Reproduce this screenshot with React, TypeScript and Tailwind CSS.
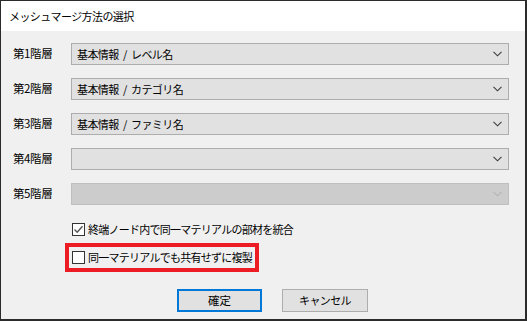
import React from 'react';

const font = { fontFamily: '"Noto Sans CJK JP", "Noto Sans", sans-serif' };

interface Level {
  label: string;
  value: string;
  disabled?: boolean;
}

const levels: Level[] = [
  { label: '第1階層', value: '基本情報 / レベル名' },
  { label: '第2階層', value: '基本情報 / カテゴリ名' },
  { label: '第3階層', value: '基本情報 / ファミリ名' },
  { label: '第4階層', value: '' },
  { label: '第5階層', value: '', disabled: true },
];

const Chevron: React.FC<{ disabled?: boolean }> = ({ disabled }) => (
  <svg width="9" height="6" viewBox="0 0 9 6" className="shrink-0">
    <polyline
      points="0.5,0.8 4.5,4.8 8.5,0.8"
      fill="none"
      stroke={disabled ? '#b4b4b4' : '#3c3c3c'}
      strokeWidth="1.1"
    />
  </svg>
);

const ComboRow: React.FC<{ level: Level }> = ({ level }) => (
  <div className="flex items-center h-[22px]">
    <span className="w-[58px] text-[11.5px] text-black tracking-[-0.4px]">{level.label}</span>
    <div
      className={`flex-1 h-[22px] flex items-center justify-between pl-[5px] pr-[6px] border ${
        level.disabled ? 'bg-[#cccccc] border-[#bfbfbf]' : 'bg-[#e1e1e1] border-[#adadad]'
      }`}
    >
      <span className="text-[11px] text-black tracking-[-0.6px] leading-none [word-spacing:2.5px]">
        {level.value}
      </span>
      <Chevron disabled={level.disabled} />
    </div>
  </div>
);

const Checkbox: React.FC<{ checked?: boolean; label: string }> = ({ checked, label }) => (
  <div className="flex items-center gap-[3px] h-[16px]">
    <div className="w-[13px] h-[13px] border border-[#333333] bg-white flex items-center justify-center">
      {checked && (
        <svg width="11" height="11" viewBox="0 0 11 11">
          <polyline points="1.5,5.5 4.2,8.2 9.5,2.2" fill="none" stroke="#555555" strokeWidth="1.4" />
        </svg>
      )}
    </div>
    <span className="text-[11px] text-black tracking-[-0.75px] leading-none">{label}</span>
  </div>
);

export default function App() {
  return (
    <div
      className="w-[527px] h-[321px] bg-[#2b2b2b] pl-px pt-px pr-[2px] pb-[2px] overflow-hidden"
      style={font}
    >
      <div className="w-full h-full flex flex-col bg-[#f0f0f0]">
        {/* Title bar */}
        <div className="h-[30px] bg-white flex items-center pl-[8px] pt-[1px]">
          <span className="text-[11px] text-black tracking-[-0.6px]">メッシュマージ方法の選択</span>
        </div>

        {/* Body */}
        <div className="flex flex-col pt-[12px] pl-[12px] pr-[16px]">
          <div className="flex flex-col gap-[13px]">
            {levels.map((l) => (
              <ComboRow key={l.label} level={l} />
            ))}
          </div>

          <div className="ml-[59px] mt-[16px]">
            <Checkbox checked label="終端ノード内で同一マテリアルの部材を統合" />
          </div>

          <div className="ml-[52px] mt-[6px] w-[194px] h-[29px] border-4 border-[#ed1c24] flex items-center pl-[3px]">
            <Checkbox label="同一マテリアルでも共有せずに複製" />
          </div>

          <div className="flex gap-[20px] mt-[17px] ml-[164px]">
            <button className="w-[85px] h-[23px] bg-[#e1e1e1] border-2 border-[#0078d7] text-[11.5px] text-black flex items-center justify-center">
              確定
            </button>
            <button className="w-[86px] h-[23px] bg-[#e1e1e1] border border-[#adadad] text-[11px] text-black tracking-[-0.6px] flex items-center justify-center">
              キャンセル
            </button>
          </div>
        </div>
      </div>
    </div>
  );
}
